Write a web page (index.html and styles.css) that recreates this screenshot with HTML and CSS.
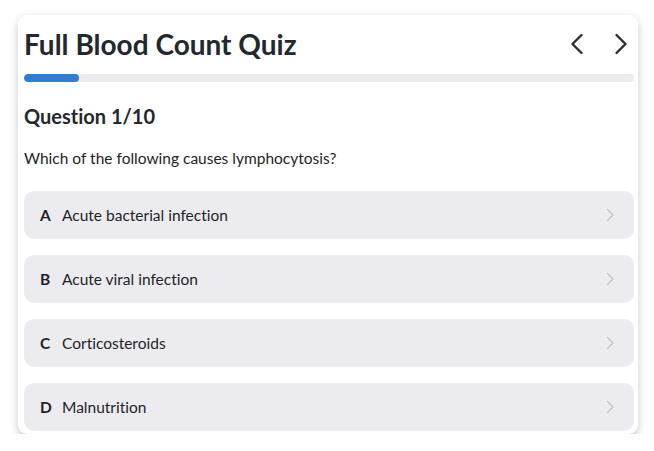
FILE: index.html
```html
<!DOCTYPE html>
<html>
<head>
<meta charset="utf-8">
<link rel="stylesheet" href="styles.css">
</head>
<body>
<div class="card">
  <div class="header">
    <h1 class="title">Full Blood Count Quiz</h1>
    <div class="nav">
      <svg class="nav-icon" width="14" height="22" viewBox="0 0 14 22"><path d="M11.5 2 L2.5 11 L11.5 20" fill="none" stroke="#2b2f36" stroke-width="2.4" stroke-linecap="round" stroke-linejoin="round"/></svg>
      <svg class="nav-icon" width="14" height="22" viewBox="0 0 14 22"><path d="M2.5 2 L11.5 11 L2.5 20" fill="none" stroke="#2b2f36" stroke-width="2.4" stroke-linecap="round" stroke-linejoin="round"/></svg>
    </div>
  </div>
  <div class="progress"><div class="progress-fill" style="width:9%"></div></div>
  <h2 class="qnum">Question 1/10</h2>
  <p class="qtext">Which of the following causes lymphocytosis?</p>
  <div class="options">
    <div class="option"><span class="letter">A</span><span class="label">Acute bacterial infection</span><svg class="chev" width="8" height="14" viewBox="0 0 8 14"><path d="M1 1 L7 7 L1 13" fill="none" stroke="#c3c4c9" stroke-width="1.4"/></svg></div>
    <div class="option"><span class="letter">B</span><span class="label">Acute viral infection</span><svg class="chev" width="8" height="14" viewBox="0 0 8 14"><path d="M1 1 L7 7 L1 13" fill="none" stroke="#c3c4c9" stroke-width="1.4"/></svg></div>
    <div class="option"><span class="letter">C</span><span class="label">Corticosteroids</span><svg class="chev" width="8" height="14" viewBox="0 0 8 14"><path d="M1 1 L7 7 L1 13" fill="none" stroke="#c3c4c9" stroke-width="1.4"/></svg></div>
    <div class="option"><span class="letter">D</span><span class="label">Malnutrition</span><svg class="chev" width="8" height="14" viewBox="0 0 8 14"><path d="M1 1 L7 7 L1 13" fill="none" stroke="#c3c4c9" stroke-width="1.4"/></svg></div>
  </div>
</div>
</body>
</html>
```

FILE: styles.css
```css
* { box-sizing: border-box; }
html, body { margin: 0; padding: 0; background: #ffffff; }
body {
  font-family: "Lato", "Open Sans", sans-serif;
  font-variant-ligatures: none;
  color: #1f2328;
  padding: 15px 16px 0 18px;
}
.card {
  width: 620px;
  height: 419px;
  background: #fff;
  border-radius: 9px;
  box-shadow: 0 3px 9px rgba(0,0,0,0.22);
  padding: 8px 4px 0 6px;
}
.header {
  display: flex;
  align-items: center;
  justify-content: space-between;
  height: 42px;
}
.title {
  margin: 0;
  font-size: 28px;
  font-weight: 700;
  color: #23272e;
}
.nav {
  display: flex;
  gap: 30px;
  padding-right: 6px;
}
.progress {
  margin-top: 9px;
  height: 8px;
  background: #ececf0;
  border-radius: 4px;
  overflow: hidden;
}
.progress-fill {
  height: 100%;
  background: #2f7fd0;
  border-radius: 4px;
}
.qnum {
  margin: 22px 0 0;
  font-size: 20px;
  font-weight: 700;
  color: #23272e;
}
.qtext {
  margin: 21px 0 0;
  font-size: 15.5px;
}
.options {
  margin-top: 24px;
  display: flex;
  flex-direction: column;
  gap: 16px;
}
.option {
  display: flex;
  align-items: center;
  height: 48px;
  background: #ececf0;
  border-radius: 10px;
  padding: 0 20px 0 16px;
  font-size: 15.5px;
}
.letter { font-weight: 700; width: 22px; }
.label { flex: 1; }
```
